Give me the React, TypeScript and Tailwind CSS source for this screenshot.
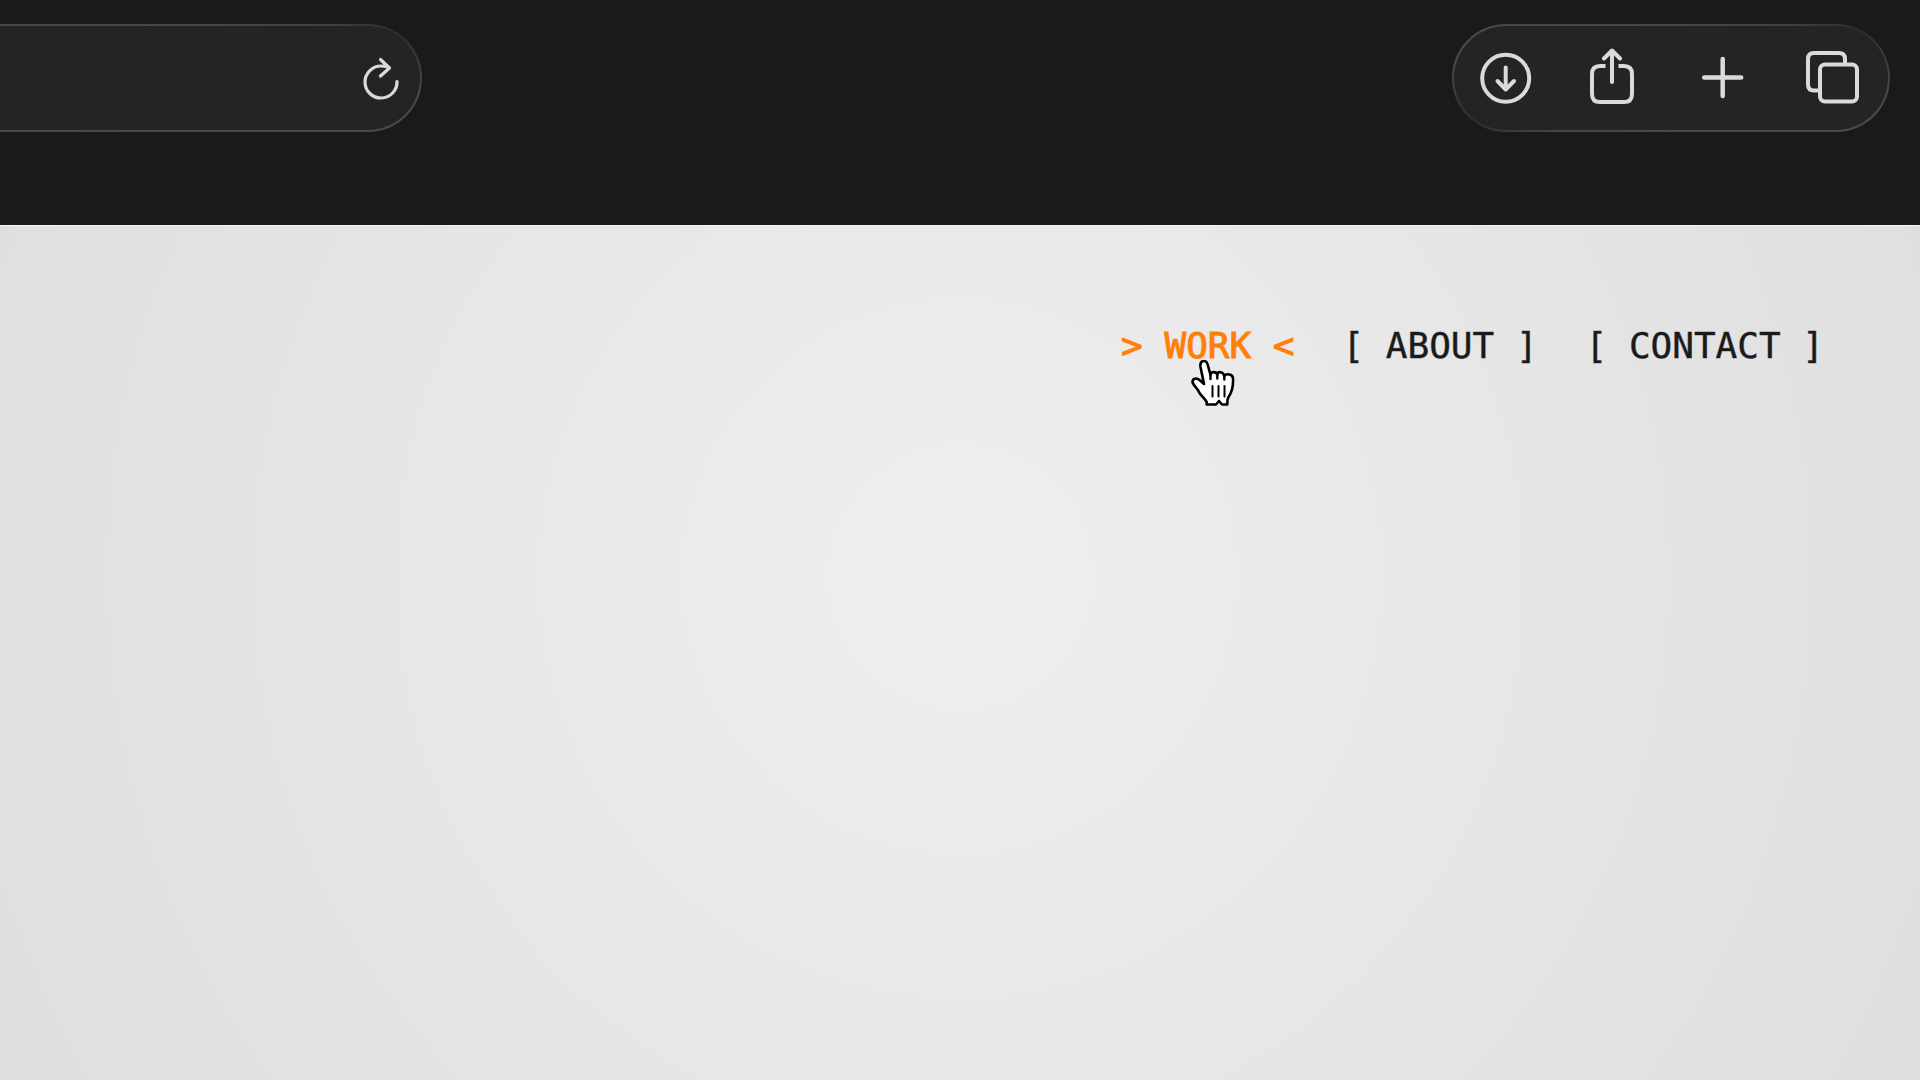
import type { ReactNode } from "react";

const links = [
  { label: "WORK", href: "#work", active: true },
  { label: "ABOUT", href: "#about", active: false },
  { label: "CONTACT", href: "#contact", active: false },
];

function IconButton({ label, children }: { label: string; children: ReactNode }) {
  return (
    <button type="button" aria-label={label} className="flex size-14 shrink-0 cursor-pointer items-center justify-center text-[#dadada]">
      <svg aria-hidden="true" viewBox="0 0 60 60" className="size-[60px] shrink-0" fill="none" stroke="currentColor" strokeWidth="4" strokeLinecap="round" strokeLinejoin="round">
        {children}
      </svg>
    </button>
  );
}

function PointerHand() {
  return (
    <svg aria-hidden="true" viewBox="0 0 44 48" className="pointer-events-none absolute top-[38px] left-[70px] z-10 h-12 w-11" strokeLinecap="round" strokeLinejoin="round">
      <path
        d="M15.700 44.500V42C13.500 38.500 10.500 36 8.500 33C7.500 29 2 25.500 1.500 22C1.500 18.500 5.500 17.500 8.500 20L13 24L9.500 7C8.500 0 15 -1 16.500 4L19.500 15C19.500 11.500 25 11 26.300 14.500C27 11 32 11.500 33.300 16C35 13.500 42 13.500 42 18.500C42.500 27 41 32 37.500 37C36 39.500 36.300 42 36.300 44.500H31L28 41L25 44.500Z"
        fill="#fff"
        stroke="#000"
        strokeWidth="2.600"
      />
      <path d="M19.500 14.500V19M26.300 14.500V18.500M33.300 16V19.500" stroke="#000" strokeWidth="2.400" fill="none" />
      <path d="M21.500 26V36.500M27.500 26V36.500M33.500 26V36.500" stroke="#000" strokeWidth="2" fill="none" />
    </svg>
  );
}

export default function App() {
  return (
    <div className="flex min-h-screen flex-col bg-[#1a1a1a]">
      <header className="flex items-start justify-between pt-6 pr-[30px] pb-[93px]">
        <div className="flex h-[108px] w-[422px] items-center justify-end rounded-r-full border-y-2 border-r-2 border-transparent pr-[11px] [background:linear-gradient(#242424,#242424)_padding-box,conic-gradient(#464646_0deg,#424242_66deg,#2c2c2c_76deg,#4a4a4a_94deg,#464646_360deg)_border-box]">
          <IconButton label="Reload page">
            <path strokeWidth="3.200" d="M46 33.500A16 16 0 1 1 30 18Q35 18 38.500 20M29.500 11.500L38.500 20L29.500 28" />
          </IconButton>
        </div>
        <div className="flex h-[108px] items-center gap-[53px] rounded-full border-2 border-transparent pr-[27px] pl-6 [background:linear-gradient(#242424,#242424)_padding-box,conic-gradient(#464646_0deg,#424242_66deg,#2c2c2c_76deg,#4a4a4a_94deg,#464646_246deg,#2e2e2e_258deg,#4a4a4a_274deg,#464646_360deg)_border-box]">
          <IconButton label="Downloads">
            <circle cx="29.700" cy="30.300" r="23.500" />
            <path d="M29.700 19.500V41M21.500 33L29.700 41.500L38 33" />
          </IconButton>
          <IconButton label="Share">
            <path strokeLinecap="butt" d="M20.500 18H15Q7 18 7 26V46Q7 54 15 54H39Q47 54 47 46V26Q47 18 39 18H33.500" />
            <path d="M27 34V2.500M19 10.500L27 2.500L35 10.500" />
          </IconButton>
          <IconButton label="New tab">
            <path strokeWidth="4.500" d="M28.700 11V48M10.200 29.500H47.200" />
          </IconButton>
          <IconButton label="Show all tabs">
            <path strokeLinecap="butt" d="M16 42.500H11Q5 42.500 5 36.500V11Q5 5 11 5H36Q42 5 42 11V16" />
            <rect x="17" y="16.500" width="37" height="37" rx="5" />
          </IconButton>
        </div>
      </header>

      <main className="grow border-t border-[#f2f2f2] bg-[radial-gradient(circle_at_50%_41%,#efefef_0px,#e0e0e0_960px,#dddddd_1200px)]">
        <nav aria-label="Main" className="flex justify-end gap-12 px-24 pt-24 font-['DejaVu_Sans_Mono',monospace] text-[36px] leading-[48px] whitespace-pre">
          {links.map(({ label, href, active }) =>
            active ? (
              <a key={label} href={href} className="relative text-[#ff7f0a] [-webkit-text-stroke:1px_#ff7f0a]">
                {`> ${label} <`}
                <PointerHand />
              </a>
            ) : (
              <a key={label} href={href} className="text-[#1a1a1a] [-webkit-text-stroke:1px_#1a1a1a70]">
                {`[ ${label} ]`}
              </a>
            ),
          )}
        </nav>
      </main>
    </div>
  );
}
